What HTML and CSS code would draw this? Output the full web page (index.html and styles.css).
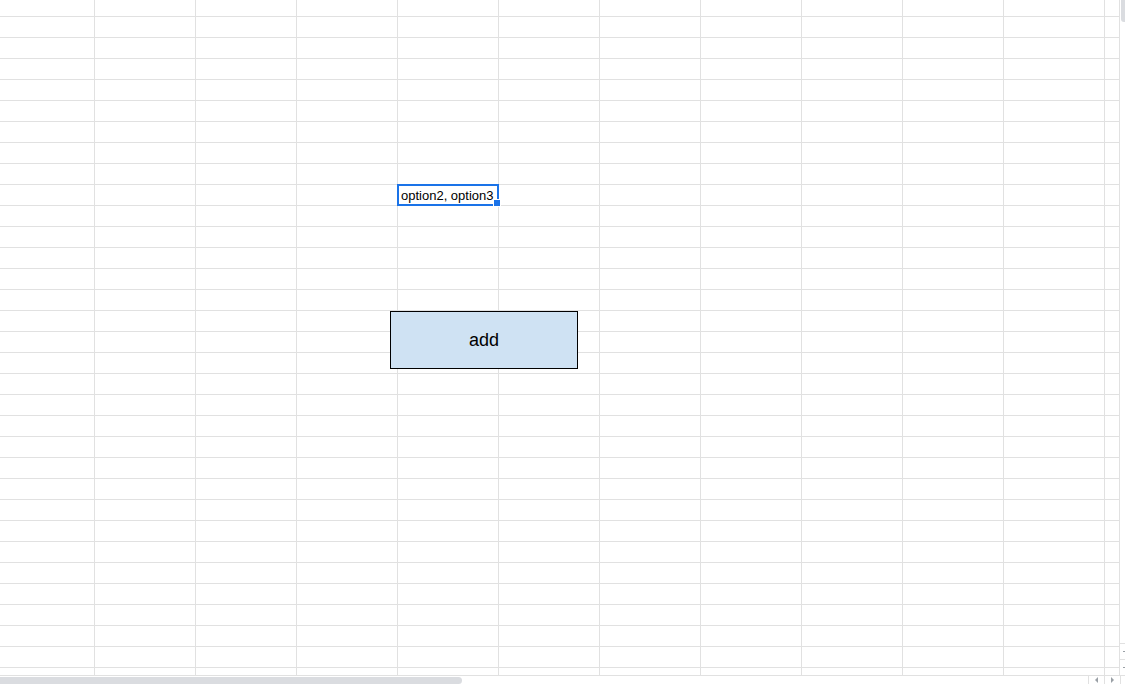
FILE: index.html
```html
<!DOCTYPE html>
<html lang="en">
<head>
<meta charset="utf-8">
<title>Sheet</title>
<link rel="stylesheet" href="styles.css">
</head>
<body>
<div class="app">
  <div class="main">
    <div class="sheet">
      <div class="cell selected">option2, option3<span class="handle"></span></div>
      <button class="drawing-btn" type="button">add</button>
    </div>
    <div class="vscroll">
      <div class="vthumb"></div>
      <div class="vbtn up"><span class="arrow-up"></span></div>
      <div class="vbtn down"><span class="arrow-down"></span></div>
    </div>
  </div>
  <div class="hscroll">
    <div class="htrack"><div class="hthumb"></div></div>
    <div class="hbtn"><span class="arrow-left"></span></div>
    <div class="hbtn"><span class="arrow-right"></span></div>
    <div class="corner"></div>
  </div>
</div>
</body>
</html>
```
FILE: styles.css
```css
html, body {
  margin: 0;
  padding: 0;
  background: #fff;
}
body {
  font-family: "Liberation Sans", Arial, sans-serif;
  color: #000;
}
.app {
  width: 1125px;
  height: 684px;
  display: flex;
  flex-direction: column;
  overflow: hidden;
}
.main {
  display: flex;
  height: 675px;
}
.sheet {
  position: relative;
  width: 1120px;
  height: 675px;
  display: grid;
  grid-template-columns: 94px repeat(10, 101px) 1fr;
  grid-template-rows: 16px repeat(31, 21px) 1fr;
  background-color: #fff;
  background-image:
    repeating-linear-gradient(to right, transparent 0 100px, #e1e1e1 100px 101px),
    repeating-linear-gradient(to bottom, transparent 0 20px, #e1e1e1 20px 21px);
  background-position: -6px 0, 0 -4px;
  background-repeat: no-repeat, no-repeat;
  background-size: 1111px 100%, 100% 672px;
}
.cell {
  font-size: 13px;
  line-height: 19px;
  white-space: nowrap;
}
.selected {
  grid-column: 5;
  grid-row: 10;
  position: relative;
  box-sizing: border-box;
  margin-right: -1px;
  margin-bottom: -1px;
  border: 2px solid #1a73e8;
  padding: 0 2px;
  overflow: visible;
}
.handle {
  position: absolute;
  right: -3px;
  bottom: -2px;
  width: 6px;
  height: 6px;
  background: #1a73e8;
  box-shadow: 0 0 0 1px #fff;
}
.drawing-btn {
  position: absolute;
  left: 390px;
  top: 311px;
  width: 188px;
  height: 58px;
  box-sizing: border-box;
  margin: 0;
  padding: 1px 0 0;
  border: 1px solid #000;
  background: #cfe2f3;
  font-family: "Liberation Sans", Arial, sans-serif;
  font-size: 18px;
  color: #000;
  display: flex;
  align-items: center;
  justify-content: center;
}
.vscroll {
  width: 5px;
  border-left: 1px solid #e1e1e1;
  display: flex;
  flex-direction: column;
}
.vthumb {
  margin-left: 1px;
  width: 4px;
  height: 22px;
  background: #dadce0;
  border-radius: 0 0 0 3px;
}
.vbtn {
  height: 15px;
  border-top: 1px solid #e1e1e1;
  position: relative;
}
.vbtn.up {
  margin-top: auto;
}
.arrow-up, .arrow-down {
  position: absolute;
  left: 3px;
  top: 7px;
  width: 2px;
  height: 1px;
  background: #9aa0a6;
}
.hscroll {
  height: 9px;
  display: flex;
}
.htrack {
  flex: 1;
  border-top: 1px solid #e1e1e1;
}
.hthumb {
  margin-top: 1px;
  width: 462px;
  height: 7px;
  background: #dadce0;
  border-radius: 0 4px 4px 0;
}
.hbtn {
  width: 15px;
  border-top: 1px solid #e1e1e1;
  border-left: 1px solid #e1e1e1;
  display: flex;
  align-items: center;
  justify-content: center;
}
.corner {
  width: 4px;
  border-top: 1px solid #e1e1e1;
  border-left: 1px solid #e1e1e1;
}
.arrow-left {
  width: 0;
  height: 0;
  border-top: 3px solid transparent;
  border-bottom: 3px solid transparent;
  border-right: 3px solid #9aa0a6;
}
.arrow-right {
  width: 0;
  height: 0;
  border-top: 3px solid transparent;
  border-bottom: 3px solid transparent;
  border-left: 3px solid #9aa0a6;
}
```
